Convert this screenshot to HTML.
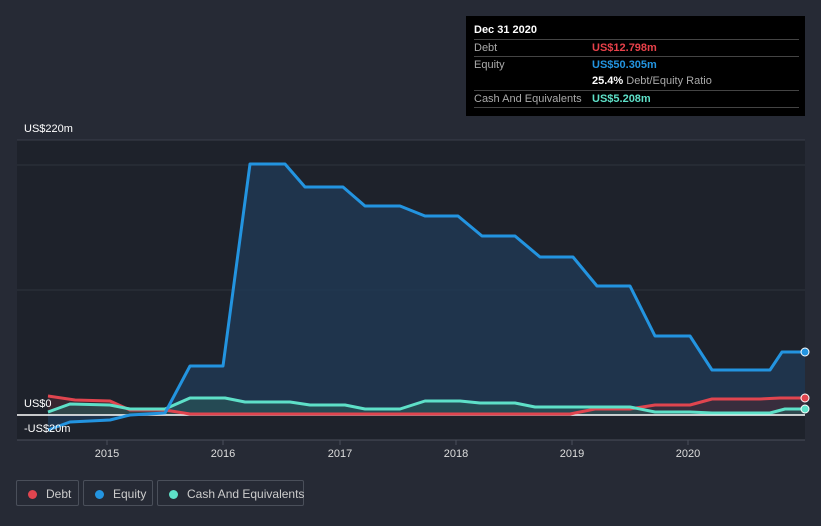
<!DOCTYPE html>
<html><head><style>
body{margin:0;width:821px;height:526px;background:#262a35;font-family:"Liberation Sans",sans-serif;overflow:hidden;position:relative}
.tt{position:absolute;left:466px;top:16px;width:339px;height:100px;background:#000;font-size:11px;color:#aaa}
.row{position:absolute;left:8px;right:6px;border-top:1px solid #444;height:17px;line-height:17px}
.v{position:absolute;left:118px;font-weight:bold}
.leg{position:absolute;top:480px;height:26px;border:1px solid #4a4f5a;border-radius:2px;color:#ccc;font-size:12px;line-height:26px;box-sizing:border-box;white-space:nowrap}
.dot{display:inline-block;width:9px;height:9px;border-radius:50%;margin:0 9px 0 11px;vertical-align:-1px}
</style></head><body>
<svg width="821" height="526" style="position:absolute;left:0;top:0">
<rect x="17" y="140" width="788" height="300" fill="#1e222b"/>
<line x1="17" y1="140" x2="805" y2="140" stroke="#3a3f4a"/>
<line x1="17" y1="165" x2="805" y2="165" stroke="#2f343e"/>
<line x1="17" y1="290" x2="805" y2="290" stroke="#2f343e"/>
<line x1="17" y1="440" x2="805" y2="440" stroke="#4a4f5a"/>
<g stroke="#4a4f5a"><line x1="107" y1="440" x2="107" y2="445"/><line x1="223" y1="440" x2="223" y2="445"/><line x1="340" y1="440" x2="340" y2="445"/><line x1="456" y1="440" x2="456" y2="445"/><line x1="572" y1="440" x2="572" y2="445"/><line x1="688" y1="440" x2="688" y2="445"/></g>
<path d="M48,430 L70,422 110,420 130,415 165,413 190,366 223,366 250,164 285,164 305,187 343,187 365,206 400,206 425,216 458,216 482,236 515,236 540,257 573,257 597,286 630,286 655,336 690,336 712,370 770,370 782,352 805,352 L805,415 48,415Z" fill="#1f3a55" opacity="0.8"/>
<path d="M48,396 L75,400 110,401 130,410 165,410 190,414 570,414 595,409 630,409 655,405 690,405 712,399 760,399 780,398 805,398 L805,415 48,415Z" fill="#4a2a33" opacity="0.6"/>
<path d="M48,412 L70,404 110,405 130,409 165,409 190,398 225,398 245,402 290,402 310,405 345,405 365,409 400,409 425,401 460,401 480,403 515,403 535,407 630,407 655,412 690,412 712,413 770,413 785,409 805,409 L805,415 48,415Z" fill="#2a5a5a" opacity="0.6"/>
<line x1="17" y1="415" x2="805" y2="415" stroke="#fff" stroke-width="1.5"/>
<g fill="none" stroke-width="3" stroke-linejoin="round">
<path d="M48,396 L75,400 110,401 130,410 165,410 190,414 570,414 595,409 630,409 655,405 690,405 712,399 760,399 780,398 805,398" stroke="#e0454f"/>
<path d="M48,412 L70,404 110,405 130,409 165,409 190,398 225,398 245,402 290,402 310,405 345,405 365,409 400,409 425,401 460,401 480,403 515,403 535,407 630,407 655,412 690,412 712,413 770,413 785,409 805,409" stroke="#5ee0c8"/>
<path d="M48,430 L70,422 110,420 130,415 165,413 190,366 223,366 250,164 285,164 305,187 343,187 365,206 400,206 425,216 458,216 482,236 515,236 540,257 573,257 597,286 630,286 655,336 690,336 712,370 770,370 782,352 805,352" stroke="#2394e0"/>
</g>
<circle cx="805" cy="352" r="4" fill="#2394e0" stroke="#fff"/>
<circle cx="805" cy="398" r="4" fill="#e0454f" stroke="#fff"/>
<circle cx="805" cy="409" r="4" fill="#5ee0c8" stroke="#fff"/>
<g fill="#fff" font-size="11" font-family="Liberation Sans">
<text x="24" y="132">US$220m</text><text x="24" y="407">US$0</text><text x="24" y="432">-US$20m</text>
<g text-anchor="middle" fill="#ddd"><text x="107" y="457">2015</text><text x="223" y="457">2016</text><text x="340" y="457">2017</text><text x="456" y="457">2018</text><text x="572" y="457">2019</text><text x="688" y="457">2020</text></g>
</g>
</svg>
<div class="tt">
<div style="position:absolute;left:8px;top:8px;color:#fff;font-weight:bold">Dec 31 2020</div>
<div class="row" style="top:23px">Debt<span class="v" style="color:#e8414a">US$12.798m</span></div>
<div class="row" style="top:40px">Equity<span class="v" style="color:#2394e0">US$50.305m</span></div>
<div class="row" style="top:57px;border-top:none"><span class="v" style="color:#fff">25.4% <span style="color:#aaa;font-weight:normal">Debt/Equity Ratio</span></span></div>
<div class="row" style="top:74px">Cash And Equivalents<span class="v" style="color:#5ee0c8">US$5.208m</span></div>
<div class="row" style="top:91px;height:0"></div>
</div>
<div class="leg" style="left:16px;width:63px"><span class="dot" style="background:#e0454f"></span>Debt</div>
<div class="leg" style="left:83px;width:70px"><span class="dot" style="background:#2394e0"></span>Equity</div>
<div class="leg" style="left:157px;width:147px"><span class="dot" style="background:#5ee0c8"></span>Cash And Equivalents</div>
</body></html>
